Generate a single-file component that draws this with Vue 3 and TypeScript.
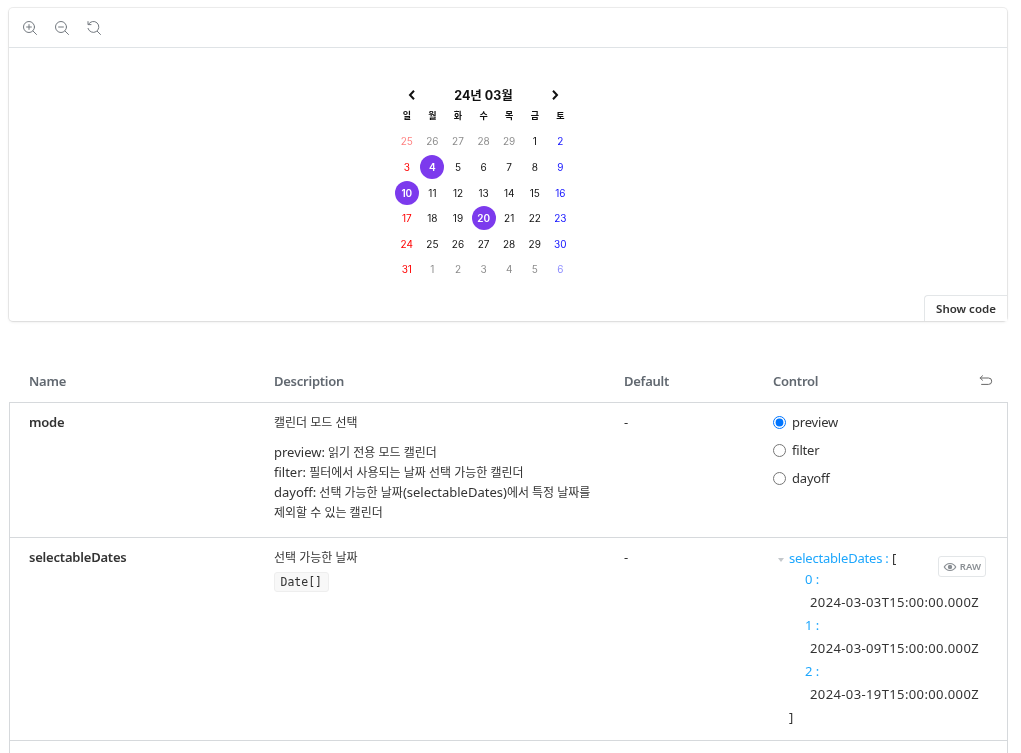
<template>
  <div class="page">
    <section class="preview">
      <div class="toolbar">
        <button v-for="tool in tools" :key="tool" class="tool" type="button">
          <svg width="16" height="16" viewBox="0 0 16 16" fill="none" stroke="currentColor" stroke-width="1" stroke-linecap="round">
            <template v-if="tool === 'in'">
              <circle cx="7" cy="7" r="5.5" />
              <path d="M11 11l3.5 3.5M4.6 7h4.8M7 4.6v4.8" />
            </template>
            <template v-else-if="tool === 'out'">
              <circle cx="7" cy="7" r="5.5" />
              <path d="M11 11l3.5 3.5M4.6 7h4.8" />
            </template>
            <template v-else>
              <path d="M2.4 4.4A5.5 5.5 0 1 1 2 8.4" />
              <path d="M2 1.6v3h3" />
              <path d="M11.2 11.2l3.3 3.3" />
            </template>
          </svg>
        </button>
      </div>

      <div class="stage">
        <div class="calendar">
          <div class="cal-head">
            <svg width="16" height="16" viewBox="0 0 16 16" fill="none" stroke="#111" stroke-width="2"><path d="M10 3.8L6 8l4 4.2" /></svg>
            <span class="cal-title">24년 03월</span>
            <svg width="16" height="16" viewBox="0 0 16 16" fill="none" stroke="#111" stroke-width="2"><path d="M6 3.8L10 8l-4 4.2" /></svg>
          </div>
          <div class="cal-grid">
            <span v-for="w in weekdays" :key="w" class="weekday">{{ w }}</span>
            <span v-for="(d, i) in days" :key="i" class="day" :class="dayClass(d, i)">{{ d.n }}</span>
          </div>
        </div>
        <button class="show-code" type="button">Show code</button>
      </div>
    </section>

    <div class="args">
      <div class="row head">
        <div>Name</div>
        <div>Description</div>
        <div>Default</div>
        <div class="control-head">
          <span>Control</span>
          <svg width="14" height="14" viewBox="0 0 14 14" fill="none" stroke="#666" stroke-width="1" stroke-linecap="round" stroke-linejoin="round">
            <path d="M3.5 1.8L1.2 4l2.3 2.2" />
            <path d="M1.2 4h8.3a3 3 0 0 1 0 6.4H2.6" />
          </svg>
        </div>
      </div>

      <div class="body">
        <div class="row">
          <div class="name">mode</div>
          <div class="desc">
            <p>캘린더 모드 선택</p>
            <p class="lines">
              <span class="en">preview:</span> 읽기 전용 모드 캘린더<br />
              <span class="en">filter:</span> 필터에서 사용되는 날짜 선택 가능한 캘린더<br />
              <span class="en">dayoff:</span> 선택 가능한 날짜<span class="en">(selectableDates)</span>에서 특정 날짜를 제외할 수 있는 캘린더
            </p>
          </div>
          <div>-</div>
          <div class="radios">
            <label v-for="m in modes" :key="m" class="radio">
              <input v-model="mode" type="radio" :value="m" />
              <span>{{ m }}</span>
            </label>
          </div>
        </div>

        <div class="row">
          <div class="name">selectableDates</div>
          <div class="desc">
            <p>선택 가능한 날짜</p>
            <code>Date[]</code>
          </div>
          <div>-</div>
          <div class="tree">
            <button class="raw" type="button">
              <svg width="14" height="14" viewBox="0 0 14 14" fill="#8a8f94"><path d="M7 3C4 3 1.6 5 .6 7c1 2 3.4 4 6.4 4s5.400-2 6.400-4C12.400 5 10 3 7 3zm0 7C4.900 10 3 8.700 2 7c1-1.700 2.900-3 5-3s4 1.300 5 3c-1 1.700-2.900 3-5 3z" /><circle cx="7" cy="7" r="2.200" /></svg>
              RAW
            </button>
            <div class="tree-root"><i class="caret"></i><span class="key">selectableDates :</span> [</div>
            <div v-for="(date, i) in dates" :key="date" class="tree-item">
              <div class="key">{{ i }} :</div>
              <div class="val">{{ date }}</div>
            </div>
            <div class="tree-end">]</div>
          </div>
        </div>
        <div class="more"></div>
      </div>
    </div>
  </div>
</template>

<script setup lang="ts">
import { ref } from 'vue'

interface Day {
  n: number
  muted?: boolean
}

const tools = ['in', 'out', 'reset']
const weekdays = ['일', '월', '화', '수', '목', '금', '토']
const modes = ['preview', 'filter', 'dayoff']
const mode = ref('preview')
const dates = ['2024-03-03T15:00:00.000Z', '2024-03-09T15:00:00.000Z', '2024-03-19T15:00:00.000Z']

const selected = [4, 10, 20]

const days: Day[] = [
  ...[25, 26, 27, 28, 29].map((n) => ({ n, muted: true })),
  ...Array.from({ length: 31 }, (_, i) => ({ n: i + 1 })),
  ...[1, 2, 3, 4, 5, 6].map((n) => ({ n, muted: true }))
]

const dayClass = (d: Day, i: number) => ({
  muted: d.muted,
  sun: i % 7 === 0,
  sat: i % 7 === 6,
  selected: !d.muted && selected.includes(d.n)
})
</script>

<style>
html,
body {
  background: #fff;
}
</style>

<style scoped>
.page {
  width: 1021px;
  height: 753px;
  overflow: hidden;
  box-sizing: border-box;
  padding: 8px 14px 0 9px;
  font-family: "Noto Sans", "Noto Sans CJK KR", sans-serif;
  font-size: 13px;
  color: #333;
  will-change: transform;
}

.preview {
  height: 313px;
  box-sizing: border-box;
  border-radius: 4px;
  background: #fff;
  box-shadow: 0 1px 3px rgba(0, 0, 0, 0.1), 0 0 0 1px rgba(0, 0, 0, 0.07);
  display: flex;
  flex-direction: column;
}

.toolbar {
  height: 40px;
  flex-shrink: 0;
  box-sizing: border-box;
  border-bottom: 1px solid #dfe3e6;
  display: flex;
  align-items: center;
  gap: 16px;
  padding-left: 13px;
}

.tool {
  width: 16px;
  height: 16px;
  padding: 0;
  border: 0;
  background: none;
  color: #73797f;
}

.stage {
  flex: 1;
  position: relative;
  display: flex;
  justify-content: center;
  padding-right: 49px;
}

.calendar {
  width: 179px;
  padding-top: 38px;
  font-family: Inter, "Noto Sans CJK KR", sans-serif;
  color: #111;
}

.cal-head {
  display: flex;
  align-items: center;
  justify-content: space-between;
  height: 17px;
  padding: 0 10px;
}

.cal-title {
  font-size: 12.5px;
  font-weight: 700;
}

.cal-grid {
  display: grid;
  grid-template-columns: repeat(7, 25.6px);
  grid-auto-rows: 25.6px;
}

.weekday {
  align-self: center;
  font-size: 9px;
  font-weight: 700;
  line-height: 16px;
  text-align: center;
}

.day {
  width: 24px;
  height: 24px;
  justify-self: center;
  align-self: center;
  border-radius: 50%;
  font-size: 10px;
  font-weight: 400;
  line-height: 24px;
  text-align: center;
}

.day.sun {
  color: #f00;
}

.day.sat {
  color: #11f;
}

.day.muted {
  opacity: 0.5;
}

.day.selected {
  background: #7c3aed;
  color: #fff;
  font-weight: 600;
}

.show-code {
  position: absolute;
  right: 0;
  bottom: 0;
  height: 26px;
  width: 83px;
  padding: 0;
  border: 0;
  border-top: 1px solid #e3e6e8;
  border-left: 1px solid #e3e6e8;
  border-radius: 4px 0 0 0;
  background: #fff;
  font-family: inherit;
  font-size: 11.5px;
  font-weight: 600;
  color: #333;
}

.args {
  margin-top: 39px;
}

.row {
  display: grid;
  grid-template-columns: 245px 350px 149px 1fr;
  padding: 0 14px 0 20px;
  line-height: 20px;
}

.head {
  height: 42px;
  align-items: center;
  font-weight: 600;
  letter-spacing: -0.25px;
  color: #616870;
}

.control-head {
  display: flex;
  justify-content: space-between;
  align-items: center;
}

.body {
  margin-right: -1px;
  border: 1px solid #d6d9dc;
  border-bottom: 0;
}

.body .row {
  padding: 9px 20px 14px 19px;
  border-bottom: 1px solid #d6d9dc;
}

.body .row:nth-child(2) {
  padding-bottom: 13px;
}

.more {
  height: 20px;
}

.name {
  font-weight: 600;
  letter-spacing: -0.2px;
}

.desc {
  padding: 1px 25px 0 0;
  font-size: 12px;
}

.desc p {
  margin: 0;
}

.desc .lines {
  margin-top: 10px;
}

.en {
  font-size: 13px;
  line-height: 0;
}

code {
  display: inline-block;
  margin-top: 4px;
  padding: 0 5.5px;
  border: 1px solid #eee;
  border-radius: 3px;
  background: #f8f8f8;
  font-family: "DejaVu Sans Mono", monospace;
  font-size: 11.5px;
  line-height: 18px;
}

.radios {
  display: flex;
  flex-direction: column;
  gap: 8px;
}

.radio {
  display: flex;
  align-items: center;
  gap: 6px;
  height: 20px;
  letter-spacing: -0.2px;
}

.radio input {
  width: 13px;
  height: 13px;
  margin: 0;
}

.tree {
  position: relative;
  padding: 1px 0 0 5px;
}

.tree-root {
  height: 21px;
}

.tree-root .key {
  letter-spacing: -0.2px;
}

.caret {
  display: inline-block;
  width: 0;
  height: 0;
  margin-right: 5px;
  vertical-align: middle;
  border-left: 3px solid transparent;
  border-right: 3px solid transparent;
  border-top: 4px solid #c4c8cc;
}

.key {
  color: #1ea7fd;
}

.tree-item .key {
  padding-left: 27px;
  height: 23px;
}

.tree-item .val {
  padding-left: 32px;
  height: 23px;
  letter-spacing: 0.38px;
}

.tree-end {
  padding-left: 11px;
}

.raw {
  position: absolute;
  top: 9px;
  right: 1px;
  display: flex;
  align-items: center;
  gap: 3px;
  height: 21px;
  padding: 0 4px;
  border: 1px solid #e3e6e8;
  border-radius: 3px;
  background: #fff;
  font-family: inherit;
  font-size: 9.5px;
  font-weight: 600;
  color: #8a8f94;
}
</style>
